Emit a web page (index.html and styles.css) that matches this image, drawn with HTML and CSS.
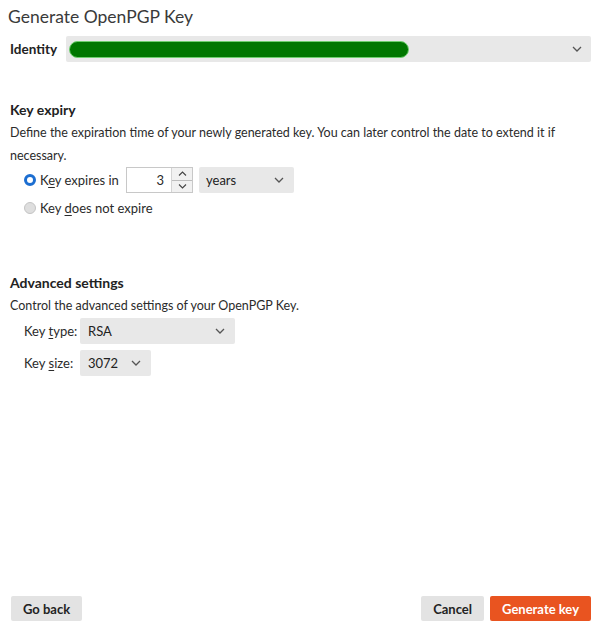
FILE: index.html
```html
<!DOCTYPE html>
<html>
<head>
<meta charset="utf-8">
<link rel="stylesheet" href="styles.css">
</head>
<body>
<div class="dialog">
  <h1 class="title">Generate OpenPGP Key</h1>
  <div class="identity-row">
    <span class="identity-label">Identity</span>
    <div class="select identity-select">
      <span class="pill"></span>
      <span class="chev"><svg width="10" height="6" viewBox="0 0 10 6"><path d="M1 1l4 4 4-4" fill="none" stroke="#555" stroke-width="1.3"/></svg></span>
    </div>
  </div>

  <section class="section expiry">
    <h2 class="heading">Key expiry</h2>
    <p class="desc">Define the expiration time of your newly generated key. You can later control the date to extend it if necessary.</p>
    <div class="radio-row">
      <span class="radio checked"></span>
      <span class="radio-label">K<u>e</u>y expires in</span>
      <div class="spin">
        <span class="spin-value">3</span>
        <div class="spin-btns">
          <span class="spin-btn"><svg width="9" height="5" viewBox="0 0 9 5"><path d="M1 4.5l3.5-3.5 3.5 3.5" fill="none" stroke="#444" stroke-width="1.1"/></svg></span>
          <span class="spin-btn"><svg width="9" height="5" viewBox="0 0 9 5"><path d="M1 .5l3.5 3.5 3.5-3.5" fill="none" stroke="#444" stroke-width="1.1"/></svg></span>
        </div>
      </div>
      <div class="select years-select">
        <span>years</span>
        <span class="chev"><svg width="10" height="6" viewBox="0 0 10 6"><path d="M1 1l4 4 4-4" fill="none" stroke="#555" stroke-width="1.3"/></svg></span>
      </div>
    </div>
    <div class="radio-row second">
      <span class="radio"></span>
      <span class="radio-label">Key <u>d</u>oes not expire</span>
    </div>
  </section>

  <section class="section advanced">
    <h2 class="heading">Advanced settings</h2>
    <p class="desc">Control the advanced settings of your OpenPGP Key.</p>
    <div class="field-row">
      <span class="field-label">Key <u>t</u>ype:</span>
      <div class="select type-select">
        <span>RSA</span>
        <span class="chev"><svg width="10" height="6" viewBox="0 0 10 6"><path d="M1 1l4 4 4-4" fill="none" stroke="#555" stroke-width="1.3"/></svg></span>
      </div>
    </div>
    <div class="field-row">
      <span class="field-label">Key <u>s</u>ize:</span>
      <div class="select size-select">
        <span>3072</span>
        <span class="chev"><svg width="10" height="6" viewBox="0 0 10 6"><path d="M1 1l4 4 4-4" fill="none" stroke="#555" stroke-width="1.3"/></svg></span>
      </div>
    </div>
  </section>

  <div class="spacer"></div>

  <div class="buttons">
    <button class="btn">Go back</button>
    <div class="right-btns">
      <button class="btn">Cancel</button>
      <button class="btn primary">Generate key</button>
    </div>
  </div>
</div>
</body>
</html>
```

FILE: styles.css
```css
html, body {
  margin: 0;
  padding: 0;
  background: #ffffff;
}
body {
  font-family: Lato, "Noto Sans", sans-serif;
  font-size: 12.5px;
  color: #2b2b2b;
}
.dialog {
  width: 600px;
  height: 627px;
  box-sizing: border-box;
  padding: 4px 9px 6px 10px;
  display: flex;
  flex-direction: column;
}
.title {
  margin: 0 0 0 -2px;
  font-size: 17.5px;
  font-weight: 400;
  line-height: 26px;
  color: #3a3a3a;
}
.identity-row {
  display: flex;
  align-items: center;
  margin-top: 6px;
  height: 26px;
}
.identity-label {
  font-weight: 700;
  font-size: 13.5px;
  width: 56px;
  color: #222;
}
.select {
  background: #e8e8e8;
  border-radius: 2px;
  display: flex;
  align-items: center;
  justify-content: space-between;
  box-sizing: border-box;
  height: 26px;
  padding: 0 10px 0 8px;
  color: #222;
}
.chev {
  display: flex;
  align-items: center;
}
.identity-select {
  flex: 1;
  padding-left: 3px;
  padding-right: 9px;
}
.pill {
  width: 340px;
  height: 17px;
  box-sizing: border-box;
  border-radius: 9px;
  background: #007700;
  border: 1px solid #6fcf6f;
}
.section {
  display: flex;
  flex-direction: column;
}
.expiry {
  margin-top: 38px;
}
.heading {
  margin: 0;
  font-size: 14px;
  font-weight: 700;
  line-height: 20px;
  color: #222;
}
.desc {
  margin: 1px 0 0 0;
  line-height: 23px;
  width: 578px;
  color: #2b2b2b;
}
.radio-row {
  display: flex;
  align-items: center;
  height: 26px;
  margin-top: 0;
  padding-left: 14px;
  white-space: nowrap;
}
.radio-row.second {
  margin-top: 2px;
}
.radio {
  width: 12px;
  height: 12px;
  flex: none;
  border-radius: 50%;
  box-sizing: border-box;
  border: 1px solid #c4c4c4;
  background: #dedede;
  margin-right: 4px;
}
.radio.checked {
  border: 3px solid #1c6ed1;
  background: #fff;
}
.radio-label {
  min-width: 86px;
  font-size: 13px;
}
u {
  text-decoration-thickness: 1px;
  text-underline-offset: 2px;
}
.spin {
  display: flex;
  width: 67px;
  height: 26px;
  box-sizing: border-box;
  border: 1px solid #c8c8c8;
  background: #fff;
  margin-right: 6px;
  font-size: 13px;
}
.spin-value {
  flex: 1;
  text-align: right;
  padding-right: 7px;
  line-height: 24px;
}
.spin-btns {
  width: 20px;
  display: flex;
  flex-direction: column;
  border-left: 1px solid #d4d4d4;
  background: #f1f1f1;
}
.spin-btn {
  flex: 1;
  display: flex;
  align-items: center;
  justify-content: center;
}
.spin-btn + .spin-btn {
  border-top: 1px solid #bdbdbd;
}
.years-select {
  width: 95px;
  padding-left: 7px;
  padding-right: 10px;
  font-size: 13px;
}
.advanced {
  margin-top: 52px;
}
.advanced .desc {
  margin-top: 1px;
}
.field-row {
  display: flex;
  align-items: center;
  height: 26px;
  margin-top: 1px;
  padding-left: 14px;
  font-size: 13px;
}
.field-row + .field-row {
  margin-top: 6px;
}
.field-label {
  width: 56px;
}
.type-select {
  width: 155px;
  padding-right: 10px;
}
.size-select {
  width: 71px;
  padding-right: 10px;
}
.spacer {
  flex: 1;
}
.buttons {
  display: flex;
  justify-content: space-between;
  align-items: center;
  padding-left: 1px;
}
.right-btns {
  display: flex;
  gap: 6px;
}
.btn {
  font-family: Lato, "Noto Sans", sans-serif;
  font-size: 13px;
  font-weight: 700;
  height: 25px;
  padding: 0 12px;
  border: none;
  border-radius: 2px;
  background: #e3e3e3;
  color: #222;
}
.btn.primary {
  background: #e95420;
  color: #fff;
}
```
